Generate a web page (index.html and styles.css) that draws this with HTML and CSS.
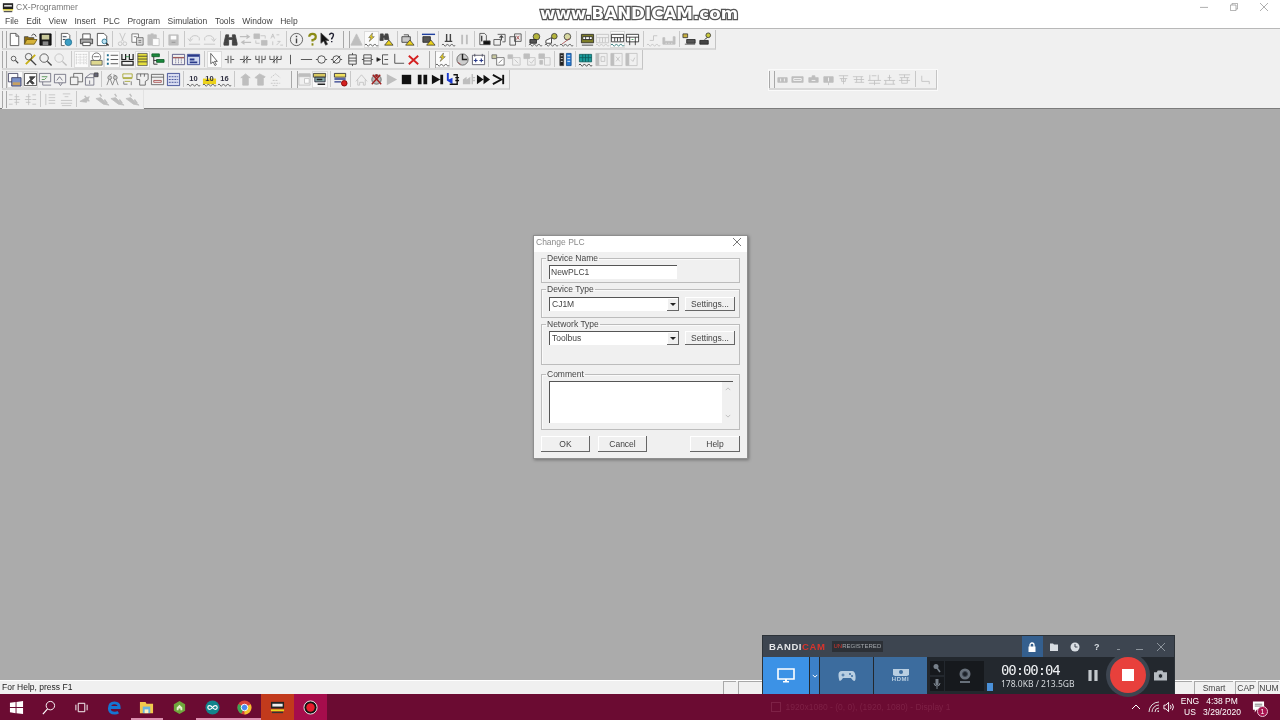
FILE: index.html
```html
<!DOCTYPE html>
<html lang="en">
<head>
  <meta charset="UTF-8">
  <title>CX-Programmer</title>
  <link rel="stylesheet" href="styles.css">
</head>
<body>
  <svg class="defs" xmlns="http://www.w3.org/2000/svg">
    <symbol id="wave" viewBox="0 0 16 16"><path d="M1 14q1-2.5 2.300 0t2.400 0 2.300 0 2.300 0 2.400 0 2.300 0"/></symbol>
    <symbol id="ytri" viewBox="0 0 16 16"><path fill="#ecd21c" stroke="#333" stroke-width=".8" d="M10.500 8.500l4.500 5.500H6z"/></symbol>
    <symbol id="new" viewBox="0 0 16 16"><path fill="#fff" d="M3.500 1.500h6l3 3v10h-9z"/><path d="M9.500 1.500v3h3"/></symbol>
    <symbol id="open" viewBox="0 0 16 16"><path fill="#8d6d10" d="M1.500 13V5h4l1 1h5v2"/><path fill="#d6b33a" stroke="#6b5510" d="M1.500 13l2.500-5h11l-3 5z"/><path stroke="#222" d="M9 4q2-3 4-1l1 2"/></symbol>
    <symbol id="save" viewBox="0 0 16 16"><path fill="#1c1c1c" stroke="#000" d="M2 2h12v12H2z"/><path fill="#c8c89a" stroke="none" d="M4 3h8v5H4z"/><path fill="#888" stroke="none" d="M5 10h6v4H5z"/></symbol>
    <symbol id="cfg" viewBox="0 0 16 16"><path fill="#fff" stroke="#444" d="M2.500 1.500h7l2 2v4M6 14.500H2.500v-13"/><circle cx="10" cy="11" r="3.500" fill="#3d9fc4" stroke="#1a6c8e"/><path stroke="#123" d="M4 5h4M4 8h3"/></symbol>
    <symbol id="print" viewBox="0 0 16 16"><path fill="#fff" stroke="#333" d="M4 7V2h8v5"/><path fill="#aaa" stroke="#333" d="M1.500 7.500h13v5h-13z"/><path fill="#fff" stroke="#333" d="M4 11h8v3.500H4z"/></symbol>
    <symbol id="prev" viewBox="0 0 16 16"><path fill="#fff" stroke="#333" d="M2.500 1.500h7l3 3v10h-10z"/><circle cx="10" cy="10" r="2.500" fill="#bfe3f2" stroke="#1a6c8e"/><path stroke="#333" stroke-width="1.500" d="M12 12l2.500 2.500"/></symbol>
    <symbol id="cut" viewBox="0 0 16 16"><path d="M5 1l4 9M11 1L7 10"/><circle cx="5.500" cy="12.500" r="2"/><circle cx="10.500" cy="12.500" r="2"/></symbol>
    <symbol id="copy" viewBox="0 0 16 16"><path fill="#fff" d="M2 2h7v9H2z"/><path fill="#cfd7ea" d="M7 6h7v8H7z"/><path d="M9 9h3M9 11h3M4 5h3"/></symbol>
    <symbol id="paste" viewBox="0 0 16 16"><path fill="currentColor" d="M2 3h9v11H2z"/><path fill="#fff" d="M7 7h7v7.500H7z"/><path stroke-width="2" d="M5 2.500h3"/></symbol>
    <symbol id="disk" viewBox="0 0 16 16"><path fill="currentColor" d="M3 3h10v11H3z"/><path fill="#fff" stroke="none" d="M5 4h6v4H5z"/><path stroke="#777" d="M6 11h4"/></symbol>
    <symbol id="undo" viewBox="0 0 16 16"><path d="M3 9q1-6 7-5 4 1 3 5"/><path d="M1 7l2.500 3L6 7M2 13h12"/></symbol>
    <symbol id="redo" viewBox="0 0 16 16"><path d="M13 9q-1-6-7-5-4 1-3 5"/><path d="M15 7l-2.500 3L10 7M2 13h12"/></symbol>
    <symbol id="binoc" viewBox="0 0 16 16"><path fill="currentColor" d="M3 3h3v3h4V3h3l2 9h-5V8H6v4H1z"/><path fill="currentColor" d="M1 12h5v2H1zM10 12h5v2h-5z"/></symbol>
    <symbol id="repl" viewBox="0 0 16 16"><path stroke-width="1.300" d="M2 5h10M9 3l3 2-3 2M14 11H4M7 9l-3 2 3 2"/></symbol>
    <symbol id="xref" viewBox="0 0 16 16"><path fill="currentColor" d="M1 2h6v5H1zM9 9h6v5H9z"/><path d="M8 4h5v3M7 12H3V9"/></symbol>
    <symbol id="addr" viewBox="0 0 16 16"><path d="M2 7l2-5 2 5M3 5h2M8 3h3M4 10v4M8 14l4-4h-3M12 14h3"/></symbol>
    <symbol id="info" viewBox="0 0 16 16"><circle cx="8" cy="8" r="6.500"/><path stroke-width="1.500" d="M8 7v5M8 4v1.500"/></symbol>
    <symbol id="hint" viewBox="0 0 16 16"><path stroke="#8a8a14" stroke-width="2.300" d="M4.500 5q0-3 3.500-3t3.500 3-3.500 3.500V10"/><path stroke="#8a8a14" stroke-width="2" d="M8 12v2.500"/></symbol>
    <symbol id="what" viewBox="0 0 16 16"><path fill="#111" d="M1 1v11l3-2.500 2 4.500 2-1-2-4h3.500z"/><path stroke="#223" stroke-width="1.500" d="M10 3q1-2 3-1.500t1 3-1.500 2.500V8M12.500 9.500V11"/></symbol>
    <symbol id="tri" viewBox="0 0 16 16"><path fill="currentColor" d="M8 2l6 12H2z"/></symbol>
    <symbol id="bolt" viewBox="0 0 16 16"><use href="#wave"/><path fill="#ecd21c" stroke="#555" stroke-width=".6" d="M9 1L5 6h2.500L5.500 10 11 5H8.500z"/></symbol>
    <symbol id="binw" viewBox="0 0 16 16"><path fill="currentColor" d="M1.500 2h3v2h2V2h3l1 6H6V6H4.500v3H1z"/><use href="#ytri"/></symbol>
    <symbol id="plcw" viewBox="0 0 16 16"><path fill="#c8c8c8" stroke="#333" d="M2 5h9v6H2z"/><path stroke="#333" d="M4 3h5v2"/><use href="#ytri"/></symbol>
    <symbol id="xfer" viewBox="0 0 16 16"><path stroke="#2040a0" stroke-width="1.500" d="M1 2.500h14"/><path fill="#555" stroke="#222" d="M2 5h8v6H2z"/><use href="#ytri"/></symbol>
    <symbol id="fork" viewBox="0 0 16 16"><use href="#wave"/><path stroke-width="1.500" d="M6 2v8M10 2v8M4 10h8"/></symbol>
    <symbol id="bars" viewBox="0 0 16 16"><path stroke-width="2" d="M5.500 3v10M10.500 3v10"/></symbol>
    <symbol id="dl" viewBox="0 0 16 16"><path d="M3 1.500h5l2 2v6M3 1.500v12h4"/><path fill="#111" d="M7 9.500h7v4H7z"/><path stroke-width="1.500" d="M5 4v6"/></symbol>
    <symbol id="ul" viewBox="0 0 16 16"><path d="M6 2.500h8v8h-3M2 8h7v6H2z"/><path stroke-width="1.200" d="M10 9V4M8 6l2-2 2 2"/></symbol>
    <symbol id="cmpx" viewBox="0 0 16 16"><path d="M2 5h6v9H2zM7 2h7v8H7z"/><path stroke="#a04040" d="M9 4l3 4M12 4L9 8"/></symbol>
    <symbol id="g1" viewBox="0 0 16 16"><circle cx="9" cy="5" r="3.500" fill="#b4b43c" stroke="#333"/><path fill="#555" stroke="#222" d="M2 8h7v4H2z"/><use href="#wave"/></symbol>
    <symbol id="g2" viewBox="0 0 16 16"><circle cx="11" cy="4.500" r="3" fill="#b4b43c" stroke="#333"/><path fill="#fff" stroke="#222" d="M2 9l6-3v6H2z"/><use href="#wave"/></symbol>
    <symbol id="g3" viewBox="0 0 16 16"><circle cx="9" cy="5" r="3.500" fill="#d8d8a0" stroke="#333"/><path stroke="#a04040" d="M3 13l8-6"/><use href="#wave"/></symbol>
    <symbol id="m1" viewBox="0 0 16 16"><path fill="#7d7d28" stroke="#222" d="M1.500 2.500h13v9h-13z"/><path fill="#fff" stroke="#222" d="M3 5h10v3H3z"/><path stroke="#222" d="M6 5v3M10 5v3M2 14h12"/></symbol>
    <symbol id="m2" viewBox="0 0 16 16"><path d="M1.500 2.500h13v9h-13zM1.500 6h13M5 6v5M8 6v5M11 6v5"/><use href="#wave"/></symbol>
    <symbol id="m3" viewBox="0 0 16 16"><path stroke="#222" d="M1.500 2.500h13v8h-13zM1.500 6h13M5 6v4M8 6v4M11 6v4"/><path stroke="#1a6c6c" d="M1 14q1-2.500 2.300 0t2.400 0 2.300 0 2.300 0 2.400 0 2.300 0"/></symbol>
    <symbol id="m4" viewBox="0 0 16 16"><path fill="#fff" stroke="#222" d="M1.500 2.500h13v8h-13z"/><path stroke="#222" d="M1.500 5.500h13M5 5.500V14M11 5.500V14"/><path stroke="#2a8a40" d="M7 8h2"/></symbol>
    <symbol id="r1" viewBox="0 0 16 16"><use href="#wave"/><path d="M4 9h4V4h4"/></symbol>
    <symbol id="r2" viewBox="0 0 16 16"><path fill="currentColor" d="M2 6h2v4h9V5h2v8H2z"/><path stroke="#fff" d="M5 12h1M8 12h1M11 12h1"/></symbol>
    <symbol id="p1" viewBox="0 0 16 16"><path fill="#c8b040" stroke="#333" d="M1 2h5v4H1z"/><path fill="#555" stroke="#222" d="M5 8h9v4H5z"/><path d="M3 13h11"/></symbol>
    <symbol id="p2" viewBox="0 0 16 16"><circle cx="12" cy="3.500" r="2.500" fill="#c8c83c" stroke="#333"/><path stroke="#222" d="M11 6L8 8"/><path fill="#444" stroke="#222" d="M3 9h9v4H3z"/></symbol>
    <symbol id="z1" viewBox="0 0 16 16"><circle cx="7" cy="7" r="2.500"/><path stroke-width="1.200" d="M9 9l3 3"/></symbol>
    <symbol id="zx" viewBox="0 0 16 16"><path stroke="#c8b014" stroke-width="2" d="M3 13L13 3"/><circle cx="6" cy="5" r="3.500"/><path stroke-width="1.500" d="M8 8l6 6"/></symbol>
    <symbol id="z" viewBox="0 0 16 16"><circle cx="6.500" cy="6.500" r="4.500"/><path stroke-width="1.500" d="M10 10l4.500 4.500"/></symbol>
    <symbol id="grid" viewBox="0 0 16 16"><path stroke-dasharray="1 1" d="M2 2.500h12M2 5.500h12M2 8.500h12M2 11.500h12M2.500 2v11M6.500 2v11M10.500 2v11M13.500 2v11"/></symbol>
    <symbol id="note" viewBox="0 0 16 16"><circle cx="8" cy="5.500" r="4.500" fill="#fff" stroke="#555"/><path fill="#ded890" stroke="#555" d="M2 9h12v5H2z"/><path stroke="#555" d="M5 5h6"/></symbol>
    <symbol id="list" viewBox="0 0 16 16"><path stroke="#333" d="M6 3.500h8M6 8h8M6 12.500h8"/><path stroke="#1a6c8e" stroke-width="2" d="M2 3.500h2M2 8h2M2 12.500h2"/></symbol>
    <symbol id="rows" viewBox="0 0 16 16"><path stroke="#222" stroke-width="1.300" d="M2 2v6h4V2M10 2v6h4V2M2 10h12v4H2z"/><path stroke="#2a8a40" d="M6 5h4"/></symbol>
    <symbol id="ylist" viewBox="0 0 16 16"><path fill="#e6df3c" stroke="#555" d="M3 1.500h10v13H3z"/><path stroke="#333" d="M3 4.500h10M3 7.500h10M3 10.500h10"/></symbol>
    <symbol id="tree" viewBox="0 0 16 16"><path fill="#1a8a3c" stroke="#0d5a26" d="M2 2h8v3H2z"/><path fill="#1a8a3c" stroke="#0d5a26" d="M7 8h8v3H7z"/><path stroke="#111" d="M4 5v8h4M4 9h3"/></symbol>
    <symbol id="tbl" viewBox="0 0 16 16"><path stroke="#447" d="M1.500 2.500h13v11h-13z"/><path stroke="#a05a5a" stroke-width="1.500" d="M2 6h12"/><path stroke="#447" stroke-dasharray="1 1" d="M5 7v6M8 7v6M11 7v6"/></symbol>
    <symbol id="tblb" viewBox="0 0 16 16"><path fill="#cfd8f0" stroke="#2a3a8a" d="M1.500 2.500h13v11h-13z"/><path stroke="#2a3a8a" stroke-width="2" d="M2 4h12M4 8h5M4 11h8"/></symbol>
    <symbol id="arrow" viewBox="0 0 16 16"><path fill="#fff" stroke="#444" d="M4 1.500v11l2.500-2 2 4 1.500-1-2-3.500H11z"/></symbol>
    <symbol id="no" viewBox="0 0 16 16"><path stroke="#333" d="M3 8h3M10 8h3M6.500 4v8M9.500 4v8"/></symbol>
    <symbol id="nc" viewBox="0 0 16 16"><path stroke="#333" d="M2 8h4M10 8h4M6.500 4v8M9.500 4v8M5 11l6-6"/></symbol>
    <symbol id="pno" viewBox="0 0 16 16"><path stroke="#333" d="M3 4v4h3M13 4v4h-3M6.500 4v8M9.500 4v8"/></symbol>
    <symbol id="pnc" viewBox="0 0 16 16"><path stroke="#333" d="M2 4v4h4M14 4v4h-4M6.500 4v8M9.500 4v8M5 11l6-6"/></symbol>
    <symbol id="vline" viewBox="0 0 16 16"><path stroke="#333" d="M8 3v10"/></symbol>
    <symbol id="hline" viewBox="0 0 16 16"><path stroke="#333" d="M2 8h12"/></symbol>
    <symbol id="coil" viewBox="0 0 16 16"><path stroke="#333" d="M2 8h2M12 8h2"/><circle cx="8" cy="8" r="4" stroke="#333"/></symbol>
    <symbol id="ncoil" viewBox="0 0 16 16"><path stroke="#333" d="M2 8h2M12 8h2M4 12l8-8"/><circle cx="8" cy="8" r="4" stroke="#333"/></symbol>
    <symbol id="cmd" viewBox="0 0 16 16"><path stroke="#333" d="M4 3h8v10H4zM4 6.500h8M4 9.500h8M8 1v2M8 13v2"/></symbol>
    <symbol id="cmd2" viewBox="0 0 16 16"><path stroke="#333" d="M4 3h8v10H4zM4 6.500h8M4 9.500h8M2 8h2M12 8h2"/></symbol>
    <symbol id="net" viewBox="0 0 16 16"><path stroke="#333" d="M8 3h6M8 3v10h6M10 8h4"/><path fill="#111" d="M2 6l4 2-4 2z"/></symbol>
    <symbol id="corner" viewBox="0 0 16 16"><path stroke="#333" d="M4 2v10h10"/></symbol>
    <symbol id="redx" viewBox="0 0 16 16"><path stroke="#d42020" stroke-width="2" d="M3 4l10 9M13 4L3 13"/></symbol>
    <symbol id="wheel" viewBox="0 0 16 16"><circle cx="8" cy="8" r="6" fill="#ccc" stroke="#555"/><path stroke="#222" stroke-width="1.500" d="M8 2v6h5"/><path stroke="#a04040" d="M3 11l3 2"/></symbol>
    <symbol id="pp" viewBox="0 0 16 16"><path fill="#fff" stroke="#445" d="M1.500 3.500h13v10h-13z"/><path stroke="#445" d="M4 2v3M12 2v3"/><path stroke="#2a3a8a" stroke-width="1.200" d="M3 9h4M5 7v4M9 9h4M11 7v4"/></symbol>
    <symbol id="bx1" viewBox="0 0 16 16"><path fill="#c8c8a0" stroke="#666" d="M1 3h5v4H1z"/><path fill="#fff" stroke="#666" d="M6 6h8v8H6z"/><path stroke="#666" d="M8 12l4-4"/></symbol>
    <symbol id="bx2" viewBox="0 0 16 16"><path fill="currentColor" d="M1 3h5v4H1z"/><path d="M6 6h8v8H6zM8 8l4 4"/></symbol>
    <symbol id="bx3" viewBox="0 0 16 16"><path fill="currentColor" d="M2 2h6v5H2z"/><path d="M6 6h8v8H6zM8 10l2 2 3-4"/></symbol>
    <symbol id="bx4" viewBox="0 0 16 16"><path fill="currentColor" d="M2 2h6v5H2z"/><path d="M8 6h6v8H8z"/><path fill="currentColor" d="M3 9h3v4H3z"/></symbol>
    <symbol id="cols" viewBox="0 0 16 16"><path fill="#222" d="M2 1.500h4v13H2z"/><path fill="#2a7ad0" stroke="#124a8a" d="M9 1.500h5v13H9z"/><path stroke="#fff" d="M3 4h2M3 7h2M3 10h2M10 4h3M10 7h3M10 10h3"/></symbol>
    <symbol id="mt" viewBox="0 0 16 16"><path fill="#1a9a9a" stroke="#0d5a5a" d="M1.500 2.500h13v8h-13z"/><path stroke="#0d5a5a" d="M5 2.500v8M8 2.500v8M11 2.500v8M1.500 6h13"/><path stroke="#222" d="M1 14q1-2.500 2.300 0t2.400 0 2.300 0 2.300 0 2.400 0 2.300 0"/></symbol>
    <symbol id="pgx" viewBox="0 0 16 16"><path fill="currentColor" d="M2 1.500h3v13H2z"/><path d="M5 1.500h9v13H5zM7.500 5h4v5h-4z"/></symbol>
    <symbol id="pgd" viewBox="0 0 16 16"><path fill="currentColor" d="M2 1.500h3v13H2z"/><path d="M5 1.500h9v13H5zM7.500 5l4 5M11.500 5l-4 5"/></symbol>
    <symbol id="pgc" viewBox="0 0 16 16"><path fill="currentColor" d="M2 1.500h3v13H2z"/><path d="M5 1.500h9v13H5zM7.500 8l2 2 2-4"/></symbol>
    <symbol id="w1" viewBox="0 0 16 16"><path stroke="#335" d="M1.500 1.500h10v9h-10z"/><path fill="#7a90c8" stroke="#335" d="M5 6h10v9H5z"/><path fill="#c8a060" stroke="none" d="M6 11h8v3H6z"/></symbol>
    <symbol id="w2" viewBox="0 0 16 16"><path stroke="#333" d="M1.500 1.500h13v13h-13z"/><path fill="#444" d="M4 12l4-4-1-3h6L9 9l3 3-2 1-3-3-2 3z"/></symbol>
    <symbol id="w3" viewBox="0 0 16 16"><path stroke="#667" d="M1.500 1.500h12v9h-12zM5 10.500V14h9"/><path stroke="#484" d="M4 5h6M4 8h3l2-2"/></symbol>
    <symbol id="w4" viewBox="0 0 16 16"><path stroke="#667" d="M1.500 2.500h12v9h-12zM6 11.500l2 3 2-3M4 9l3-4 3 4"/></symbol>
    <symbol id="w5" viewBox="0 0 16 16"><path stroke="#555" d="M1.500 5.500h8v8h-8zM5 5.500V1.500h9.500v9H9.500"/></symbol>
    <symbol id="w6" viewBox="0 0 16 16"><path stroke="#667" d="M1.500 6h9v8h-9zM1.500 6l5-4h4v4"/><path fill="#667" d="M11 1h4v4h-4z"/><path stroke="#667" d="M6 9v4"/></symbol>
    <symbol id="a1" viewBox="0 0 16 16"><path stroke="#777" d="M2 14l3-8 3 8M8 14l3-8 3 8M4 4l3-2M9 3l3 1"/><circle cx="5" cy="6" r="2" fill="#ccc" stroke="#777"/><circle cx="11" cy="6" r="2" fill="#ccc" stroke="#777"/></symbol>
    <symbol id="a2" viewBox="0 0 16 16"><path stroke="#a0a020" d="M3 2h10v4H3zM3 7h10M5 10h6"/><path stroke="#666" d="M4 10v3h4M12 10v4"/></symbol>
    <symbol id="a3" viewBox="0 0 16 16"><path stroke="#555" d="M2 2h12v6l-3 2v4H5V8H2z"/><path stroke="#555" d="M6 2v3M10 2v3"/></symbol>
    <symbol id="a4" viewBox="0 0 16 16"><path stroke="#555" d="M1.500 2.500h13v11h-13zM1.500 5.500h13"/><path stroke="#a04040" d="M4 9h8v2H4z"/></symbol>
    <symbol id="a5" viewBox="0 0 16 16"><path fill="#d8dcf0" stroke="#2a3a8a" d="M1.500 1.500h13v13h-13z"/><path stroke="#2a3a8a" stroke-dasharray="2 1" d="M3 5h10M3 8h10M3 11h10"/></symbol>
    <symbol id="up" viewBox="0 0 16 16"><path fill="currentColor" d="M3 6l5-4 5 4h-2v8H5V6z"/></symbol>
    <symbol id="up2" viewBox="0 0 16 16"><path fill="currentColor" d="M2 6l5-4 6 3-2 2v7H5V7z"/></symbol>
    <symbol id="up3" viewBox="0 0 16 16"><path d="M3 6l5-4 5 4M5 9h6M3 12h10M5 14.500h6" stroke-dasharray="2 1"/></symbol>
    <symbol id="s1" viewBox="0 0 16 16"><path fill="currentColor" d="M2 2h12v3H2z"/><path d="M2 2h12v12H2z"/><path fill="#fff" d="M8 7h5v5H8z"/></symbol>
    <symbol id="s2" viewBox="0 0 16 16"><path fill="#d8c860" stroke="#333" d="M1.500 1.500h13v4h-13z"/><path fill="#8aa" stroke="#223" d="M3 5.500h11v5H3z"/><path stroke="#222" stroke-width="1.500" d="M6 13h8M5 8h6"/></symbol>
    <symbol id="s3" viewBox="0 0 16 16"><path fill="#f0e060" stroke="#223" d="M1.500 1.500h12v4h-12z"/><path stroke="#2a3a8a" stroke-width="1.500" d="M1.500 7.500h12M1.500 10.500h7"/><circle cx="12" cy="12" r="3" fill="#d42020" stroke="#700"/></symbol>
    <symbol id="home" viewBox="0 0 16 16"><path d="M2 10l6-7 6 7M4 8v6h2v-3h4v3h2V8"/></symbol>
    <symbol id="run" viewBox="0 0 16 16"><circle cx="8" cy="8" r="5" fill="#bbb" stroke="#555"/><path stroke="#a02020" stroke-width="1.500" d="M4 3l9 10M12 3L3 13"/><circle cx="8" cy="4" r="1.500" fill="#a02020" stroke="none"/></symbol>
    <symbol id="play" viewBox="0 0 16 16"><path fill="currentColor" stroke="none" d="M3 2l11 6-11 6z"/></symbol>
    <symbol id="stop" viewBox="0 0 16 16"><path fill="#111" stroke="none" d="M3 3h10v10H3z"/></symbol>
    <symbol id="pause" viewBox="0 0 16 16"><path fill="#111" stroke="none" d="M3 3h4v10H3zM9 3h4v10H9z"/></symbol>
    <symbol id="step" viewBox="0 0 16 16"><path fill="#111" stroke="none" d="M2 3l9 5-9 5zM11 3h3v10h-3z"/></symbol>
    <symbol id="stepin" viewBox="0 0 16 16"><path fill="#1a3ad0" stroke="none" d="M2 1h2v7l4-2v7L2 9z"/><path stroke="#111" stroke-width="1.500" d="M9 3h4v10H5M11 6h4M11 9h4"/></symbol>
    <symbol id="stepout" viewBox="0 0 16 16"><path fill="currentColor" stroke="none" d="M2 8l4-3v3l4-3v8H2z"/><path stroke-width="1.500" d="M12 2v11M12 6h3M12 9h3"/></symbol>
    <symbol id="ff" viewBox="0 0 16 16"><path fill="#111" stroke="none" d="M1 3l7 5-7 5zM8 3l7 5-7 5z"/></symbol>
    <symbol id="skip" viewBox="0 0 16 16"><path stroke="#111" stroke-width="2" d="M2 3l9 5-9 5"/><path stroke="#111" stroke-width="2" d="M13 3v10"/></symbol>
    <symbol id="in1" viewBox="0 0 16 16"><path d="M2 3h4M2 8h4M2 13h4M10 2v12M7 8h7M8 5h5M8 11h5"/></symbol>
    <symbol id="in2" viewBox="0 0 16 16"><path d="M10 3h4M10 8h4M10 13h4M6 2v12M2 8h7M3 5h5M3 11h5"/></symbol>
    <symbol id="ln1" viewBox="0 0 16 16"><path d="M3 2v12M6 3h7M6 6h7M6 9h7M6 12h7"/></symbol>
    <symbol id="ln2" viewBox="0 0 16 16"><path d="M4 2h8M6 5h4M2 9h12M2 12h12M3 14.500h10"/></symbol>
    <symbol id="d1" viewBox="0 0 16 16"><path fill="currentColor" d="M1 10l5-3 5-2-3 6z"/><path stroke-width="1.500" d="M6 4l5 6"/></symbol>
    <symbol id="d2" viewBox="0 0 16 16"><path fill="currentColor" d="M1 7l5-1 4 4 5 4-6-1-4-3z"/><path stroke-width="1.500" d="M5 2l2 3M10 8l3 4"/></symbol>
    <symbol id="f1" viewBox="0 0 16 16"><path fill="currentColor" d="M3 6h10v5H3z"/><path stroke="#fff" d="M6 7v3M10 7v3"/></symbol>
    <symbol id="f2" viewBox="0 0 16 16"><path fill="currentColor" d="M2 5h12v6H2z"/><path stroke="#fff" d="M4 7h8v2H4z"/></symbol>
    <symbol id="f3" viewBox="0 0 16 16"><path fill="currentColor" d="M3 6h10v5H3zM6.500 4h3v3h-3z"/><path stroke="#fff" d="M6 9h4"/></symbol>
    <symbol id="f4" viewBox="0 0 16 16"><path fill="currentColor" d="M3 5h10v6H3z"/><path stroke="#fff" d="M8 6v4"/><path d="M8 11v3"/></symbol>
    <symbol id="f5" viewBox="0 0 16 16"><path d="M3 4h10M4 7h8M8 4v9M6 7v3h4V7"/></symbol>
    <symbol id="f6" viewBox="0 0 16 16"><path d="M2 5h11M3 8h11M4 11h10M6 5v6M11 5v6"/></symbol>
    <symbol id="f7" viewBox="0 0 16 16"><path d="M3 3v6M12 3v6M1 9h14M5 4h5M2 12h12M8 9v5"/></symbol>
    <symbol id="f8" viewBox="0 0 16 16"><path d="M8 3v6M2 9h12M4 9v4M12 9v4M2 13h12M6 6h4"/></symbol>
    <symbol id="f9" viewBox="0 0 16 16"><path d="M2 3h12M3 6h10M8 3v3M2 9h12M5 6v6h6V6"/></symbol>
    <symbol id="f10" viewBox="0 0 16 16"><path d="M4 4v6h8v3"/></symbol>
  </svg>

  <div class="titlebar">
    <svg class="appicon" viewBox="0 0 14 12"><path fill="#222" d="M1 1h12v7H1z"/><path fill="#ddd" d="M2.500 3h9v2h-9z"/><path fill="#d8c820" d="M1 8h12v1.500H1z"/><path fill="#555" d="M2 10h10v1.500H2z"/></svg>
    <span class="apptitle">CX-Programmer</span>
    <div class="winbtns">
      <svg class="winbtn" viewBox="0 0 10 10"><path d="M0 5.500h10"/></svg>
      <svg class="winbtn" viewBox="0 0 10 10"><path d="M.5 2.500h7v7h-7zM2.500 2.500v-2h7v7h-2"/></svg>
      <svg class="winbtn" viewBox="0 0 10 10"><path d="M0 0l10 10M10 0L0 10"/></svg>
    </div>
  </div>

  <nav class="menubar">
    <span>File</span><span>Edit</span><span>View</span><span>Insert</span><span>PLC</span><span>Program</span><span>Simulation</span><span>Tools</span><span>Window</span><span>Help</span>
  </nav>

  <div class="toolbars">
    <div class="toolrow">
      <div class="bar">
        <span class="grip"></span>
        <button class="tb"><svg class="ic"><use href="#new"/></svg></button>
        <button class="tb"><svg class="ic"><use href="#open"/></svg></button>
        <button class="tb"><svg class="ic"><use href="#save"/></svg></button>
        <span class="sep"></span>
        <button class="tb"><svg class="ic"><use href="#cfg"/></svg></button>
        <span class="sep"></span>
        <button class="tb"><svg class="ic"><use href="#print"/></svg></button>
        <button class="tb"><svg class="ic"><use href="#prev"/></svg></button>
        <span class="sep"></span>
        <button class="tb off"><svg class="ic"><use href="#cut"/></svg></button>
        <button class="tb dim"><svg class="ic"><use href="#copy"/></svg></button>
        <button class="tb off"><svg class="ic"><use href="#paste"/></svg></button>
        <span class="sep"></span>
        <button class="tb off"><svg class="ic"><use href="#disk"/></svg></button>
        <span class="sep"></span>
        <button class="tb off"><svg class="ic"><use href="#undo"/></svg></button>
        <button class="tb off"><svg class="ic"><use href="#redo"/></svg></button>
        <span class="sep"></span>
        <button class="tb"><svg class="ic"><use href="#binoc"/></svg></button>
        <button class="tb off"><svg class="ic"><use href="#repl"/></svg></button>
        <button class="tb off"><svg class="ic"><use href="#xref"/></svg></button>
        <button class="tb off"><svg class="ic"><use href="#addr"/></svg></button>
        <span class="sep"></span>
        <button class="tb"><svg class="ic"><use href="#info"/></svg></button>
        <button class="tb"><svg class="ic"><use href="#hint"/></svg></button>
        <button class="tb"><svg class="ic"><use href="#what"/></svg></button>
        <span class="midgrip"></span>
        <button class="tb off"><svg class="ic"><use href="#tri"/></svg></button>
        <button class="tb on"><svg class="ic"><use href="#bolt"/></svg></button>
        <button class="tb"><svg class="ic"><use href="#binw"/></svg></button>
        <span class="sep"></span>
        <button class="tb"><svg class="ic"><use href="#plcw"/></svg></button>
        <span class="sep"></span>
        <button class="tb"><svg class="ic"><use href="#xfer"/></svg></button>
        <span class="sep"></span>
        <button class="tb"><svg class="ic"><use href="#fork"/></svg></button>
        <button class="tb off"><svg class="ic"><use href="#bars"/></svg></button>
        <span class="sep"></span>
        <button class="tb"><svg class="ic"><use href="#dl"/></svg></button>
        <button class="tb"><svg class="ic"><use href="#ul"/></svg></button>
        <button class="tb"><svg class="ic"><use href="#cmpx"/></svg></button>
        <span class="sep"></span>
        <button class="tb"><svg class="ic"><use href="#g1"/></svg></button>
        <button class="tb"><svg class="ic"><use href="#g2"/></svg></button>
        <button class="tb"><svg class="ic"><use href="#g3"/></svg></button>
        <span class="sep"></span>
        <button class="tb"><svg class="ic"><use href="#m1"/></svg></button>
        <button class="tb off"><svg class="ic"><use href="#m2"/></svg></button>
        <button class="tb on"><svg class="ic"><use href="#m3"/></svg></button>
        <button class="tb"><svg class="ic"><use href="#m4"/></svg></button>
        <span class="sep"></span>
        <button class="tb off"><svg class="ic"><use href="#r1"/></svg></button>
        <button class="tb off"><svg class="ic"><use href="#r2"/></svg></button>
        <span class="sep"></span>
        <button class="tb"><svg class="ic"><use href="#p1"/></svg></button>
        <button class="tb"><svg class="ic"><use href="#p2"/></svg></button>
      </div>
    </div>
    <div class="toolrow">
      <div class="bar">
        <span class="grip"></span>
        <button class="tb"><svg class="ic"><use href="#z1"/></svg></button>
        <button class="tb"><svg class="ic"><use href="#zx"/></svg></button>
        <button class="tb"><svg class="ic"><use href="#z"/></svg></button>
        <button class="tb off"><svg class="ic"><use href="#z"/></svg></button>
        <span class="sep"></span>
        <button class="tb on off"><svg class="ic"><use href="#grid"/></svg></button>
        <button class="tb on"><svg class="ic"><use href="#note"/></svg></button>
        <button class="tb on"><svg class="ic"><use href="#list"/></svg></button>
        <button class="tb"><svg class="ic"><use href="#rows"/></svg></button>
        <button class="tb on"><svg class="ic"><use href="#ylist"/></svg></button>
        <button class="tb"><svg class="ic"><use href="#tree"/></svg></button>
        <span class="sep"></span>
        <button class="tb"><svg class="ic"><use href="#tbl"/></svg></button>
        <button class="tb"><svg class="ic"><use href="#tblb"/></svg></button>
        <span class="sep"></span>
        <button class="tb on"><svg class="ic"><use href="#arrow"/></svg></button>
        <button class="tb"><svg class="ic"><use href="#no"/></svg></button>
        <button class="tb"><svg class="ic"><use href="#nc"/></svg></button>
        <button class="tb"><svg class="ic"><use href="#pno"/></svg></button>
        <button class="tb"><svg class="ic"><use href="#pnc"/></svg></button>
        <button class="tb"><svg class="ic"><use href="#vline"/></svg></button>
        <button class="tb"><svg class="ic"><use href="#hline"/></svg></button>
        <button class="tb"><svg class="ic"><use href="#coil"/></svg></button>
        <button class="tb"><svg class="ic"><use href="#ncoil"/></svg></button>
        <button class="tb"><svg class="ic"><use href="#cmd"/></svg></button>
        <button class="tb"><svg class="ic"><use href="#cmd2"/></svg></button>
        <button class="tb"><svg class="ic"><use href="#net"/></svg></button>
        <button class="tb"><svg class="ic"><use href="#corner"/></svg></button>
        <button class="tb"><svg class="ic"><use href="#redx"/></svg></button>
        <span class="midgrip"></span>
        <button class="tb on"><svg class="ic"><use href="#bolt"/></svg></button>
        <span class="sep"></span>
        <button class="tb"><svg class="ic"><use href="#wheel"/></svg></button>
        <button class="tb"><svg class="ic"><use href="#pp"/></svg></button>
        <span class="sep"></span>
        <button class="tb"><svg class="ic"><use href="#bx1"/></svg></button>
        <button class="tb off"><svg class="ic"><use href="#bx2"/></svg></button>
        <button class="tb off"><svg class="ic"><use href="#bx3"/></svg></button>
        <button class="tb off"><svg class="ic"><use href="#bx4"/></svg></button>
        <span class="sep"></span>
        <button class="tb"><svg class="ic"><use href="#cols"/></svg></button>
        <span class="sep"></span>
        <button class="tb"><svg class="ic"><use href="#mt"/></svg></button>
        <button class="tb off"><svg class="ic"><use href="#pgx"/></svg></button>
        <button class="tb off"><svg class="ic"><use href="#pgd"/></svg></button>
        <button class="tb off"><svg class="ic"><use href="#pgc"/></svg></button>
      </div>
    </div>
    <div class="toolrow">
      <div class="bar">
        <span class="grip"></span>
        <button class="tb on"><svg class="ic"><use href="#w1"/></svg></button>
        <button class="tb on"><svg class="ic"><use href="#w2"/></svg></button>
        <button class="tb"><svg class="ic"><use href="#w3"/></svg></button>
        <button class="tb"><svg class="ic"><use href="#w4"/></svg></button>
        <button class="tb"><svg class="ic"><use href="#w5"/></svg></button>
        <button class="tb"><svg class="ic"><use href="#w6"/></svg></button>
        <span class="sep"></span>
        <button class="tb"><svg class="ic"><use href="#a1"/></svg></button>
        <button class="tb"><svg class="ic"><use href="#a2"/></svg></button>
        <button class="tb"><svg class="ic"><use href="#a3"/></svg></button>
        <button class="tb"><svg class="ic"><use href="#a4"/></svg></button>
        <button class="tb"><svg class="ic"><use href="#a5"/></svg></button>
        <span class="sep"></span>
        <button class="tb"><svg class="ic" viewBox="0 0 16 16"><use href="#wave"/><text x="8" y="10" class="ictext">10</text></svg></button>
        <button class="tb"><svg class="ic" viewBox="0 0 16 16"><path class="icmark" d="M1 7h14v6H1z"/><use href="#wave"/><text x="8" y="10" class="ictext">10</text></svg></button>
        <button class="tb"><svg class="ic" viewBox="0 0 16 16"><use href="#wave"/><text x="8" y="10" class="ictext">16</text></svg></button>
        <span class="sep"></span>
        <button class="tb off"><svg class="ic"><use href="#up"/></svg></button>
        <button class="tb off"><svg class="ic"><use href="#up2"/></svg></button>
        <button class="tb off"><svg class="ic"><use href="#up3"/></svg></button>
        <span class="midgrip"></span>
        <button class="tb off"><svg class="ic"><use href="#s1"/></svg></button>
        <button class="tb on"><svg class="ic"><use href="#s2"/></svg></button>
        <span class="sep"></span>
        <button class="tb"><svg class="ic"><use href="#s3"/></svg></button>
        <span class="sep"></span>
        <button class="tb off"><svg class="ic"><use href="#home"/></svg></button>
        <button class="tb"><svg class="ic"><use href="#run"/></svg></button>
        <button class="tb off"><svg class="ic"><use href="#play"/></svg></button>
        <button class="tb"><svg class="ic"><use href="#stop"/></svg></button>
        <button class="tb"><svg class="ic"><use href="#pause"/></svg></button>
        <button class="tb"><svg class="ic"><use href="#step"/></svg></button>
        <button class="tb"><svg class="ic"><use href="#stepin"/></svg></button>
        <button class="tb off"><svg class="ic"><use href="#stepout"/></svg></button>
        <button class="tb"><svg class="ic"><use href="#ff"/></svg></button>
        <button class="tb"><svg class="ic"><use href="#skip"/></svg></button>
      </div>
      <div class="bar floatbar">
        <span class="grip"></span>
        <button class="tb off"><svg class="ic"><use href="#f1"/></svg></button>
        <button class="tb off"><svg class="ic"><use href="#f2"/></svg></button>
        <button class="tb off"><svg class="ic"><use href="#f3"/></svg></button>
        <button class="tb off"><svg class="ic"><use href="#f4"/></svg></button>
        <button class="tb off"><svg class="ic"><use href="#f5"/></svg></button>
        <button class="tb off"><svg class="ic"><use href="#f6"/></svg></button>
        <button class="tb off"><svg class="ic"><use href="#f7"/></svg></button>
        <button class="tb off"><svg class="ic"><use href="#f8"/></svg></button>
        <button class="tb off"><svg class="ic"><use href="#f9"/></svg></button>
        <span class="sep"></span>
        <button class="tb off"><svg class="ic"><use href="#f10"/></svg></button>
      </div>
    </div>
    <div class="toolrow">
      <div class="bar lastbar">
        <span class="grip"></span>
        <button class="tb off"><svg class="ic"><use href="#in1"/></svg></button>
        <button class="tb off"><svg class="ic"><use href="#in2"/></svg></button>
        <span class="sep"></span>
        <button class="tb off"><svg class="ic"><use href="#ln1"/></svg></button>
        <button class="tb off"><svg class="ic"><use href="#ln2"/></svg></button>
        <span class="sep"></span>
        <button class="tb off"><svg class="ic"><use href="#d1"/></svg></button>
        <button class="tb off"><svg class="ic"><use href="#d2"/></svg></button>
        <button class="tb off"><svg class="ic"><use href="#d2"/></svg></button>
        <button class="tb off"><svg class="ic"><use href="#d2"/></svg></button>
      </div>
    </div>
  </div>

  <main class="workspace"></main>

  <div class="statusbar">
    <span class="statustext">For Help, press F1</span>
    <span class="panel p-a"></span>
    <span class="panel p-b"></span>
    <span class="panel p-smart">Smart</span>
    <span class="panel p-cap">CAP</span>
    <span class="panel p-num">NUM</span>
  </div>

  <div class="taskbar">
    <span class="task"><svg class="tkicon" viewBox="0 0 16 16"><path fill="#fff" d="M1 3l6-1v5.500H1zM8 2l7-1v6.500H8zM1 8.500h6V14l-6-1zM8 8.500h7V15l-7-1z"/></svg></span>
    <span class="task"><svg class="tkicon" viewBox="0 0 16 16"><circle cx="10" cy="6" r="4.500" fill="none" stroke="#fff"/><path stroke="#fff" stroke-width="1.300" d="M7 9.500L2 15"/></svg></span>
    <span class="task"><svg class="tkicon" viewBox="0 0 16 16"><path fill="none" stroke="#fff" d="M4.500 3.500h7v9h-7zM2 5v6M14 5v6"/></svg></span>
    <span class="task"><svg class="tkicon" viewBox="0 0 16 16"><path fill="none" stroke="#1676d2" stroke-width="3" d="M3 8h10q0-5-5-5-5.500 0-5.500 6 0 5 6 5 2 0 3.500-1"/></svg></span>
    <span class="task task-open"><svg class="tkicon" viewBox="0 0 16 16"><path fill="#f2c94c" d="M1 2h6l1 2h7v10H1z"/><path fill="#6cb6dc" d="M4 7h8v7H4z"/><path fill="#fff3c4" d="M6 10h4v4H6z"/></svg></span>
    <span class="task"><svg class="tkicon" viewBox="0 0 16 16"><path fill="#6fa83c" d="M8 1l6 3.500v7L8 15l-6-3.500v-7z"/><path fill="#e8f0d0" d="M8 5l3 3v3H9V9H7v2H5V8z"/></svg></span>
    <span class="task task-open"><svg class="tkicon" viewBox="0 0 16 16"><circle cx="8" cy="8" r="7.500" fill="#12838c"/><path fill="none" stroke="#fff" stroke-width="1.300" d="M8 8q-1.500-2-3-2a2 2 0 000 4q1.500 0 3-2 1.500-2 3-2a2 2 0 010 4q-1.500 0-3-2z"/></svg></span>
    <span class="task task-open"><svg class="tkicon" viewBox="0 0 16 16"><circle cx="8" cy="8" r="7.500" fill="#d8433a"/><path fill="#f2c230" d="M8 8l6.500-3.500A7.500 7.500 0 018 15.500z"/><path fill="#3aa655" d="M8 8L4.500 14.600A7.500 7.500 0 011.500 4.200z"/><circle cx="8" cy="8" r="3.500" fill="#4a8af0" stroke="#fff"/></svg></span>
    <span class="task task-cx"><svg class="tkicon" viewBox="0 0 16 16"><path fill="#222" d="M1 2h14v7H1z"/><path fill="#eee" d="M2.500 4h11v3h-11z"/><path fill="#e8d820" d="M1 10h14v2H1z"/><path fill="#333" d="M2 12.500h12V14H2z"/></svg></span>
    <span class="task task-rec"><svg class="tkicon" viewBox="0 0 16 16"><circle cx="8" cy="8" r="7" fill="#111" stroke="#eee"/><circle cx="8" cy="8" r="4.500" fill="#e81c2c"/></svg></span>
    <span class="dimtext"><span class="dimbox"></span>1920x1080 - (0, 0), (1920, 1080) - Display 1</span>
    <div class="tray">
      <svg class="tray-chev" viewBox="0 0 10 6"><path fill="none" stroke="#fff" d="M1 5l4-4 4 4"/></svg>
      <svg class="tray-net" viewBox="0 0 12 12"><path fill="none" stroke="#ddd" d="M1 11a10 10 0 0110-10M4 11a7 7 0 017-7M7 11a4 4 0 014-4"/><path fill="#ddd" d="M9.500 9.500H11V11H9.500z"/></svg>
      <svg class="tray-vol" viewBox="0 0 14 12"><path fill="none" stroke="#fff" d="M1 4h2l3-3v10L3 8H1z"/><path fill="none" stroke="#fff" d="M8 4q1.500 2 0 4M10 2.500q2.500 3.500 0 7"/></svg>
      <span class="tray-lang">ENG<br>US</span>
      <span class="tray-clock">4:38 PM<br>3/29/2020</span>
      <span class="tray-note">
        <svg class="tray-noteicon" viewBox="0 0 14 12"><path fill="#fff" d="M1 0h12v9H5l-2 3V9H1z"/><path stroke="#777" d="M3 3h8M3 5h8"/></svg>
        <span class="tray-badge">1</span>
      </span>
    </div>
  </div>

  <div class="watermark">www.BANDICAM.com</div>

  <section class="dialog">
    <header class="dlgtitle">
      <span>Change PLC</span>
      <svg class="dlgclose" viewBox="0 0 8 8"><path d="M0 0l8 8M8 0L0 8"/></svg>
    </header>
    <div class="dlgbody">
      <fieldset class="grp grp-name">
        <legend>Device Name</legend>
        <div class="field">NewPLC1</div>
      </fieldset>
      <fieldset class="grp grp-type">
        <legend>Device Type</legend>
        <div class="grprow">
          <div class="combo"><span>CJ1M</span><span class="comboarrow"></span></div>
          <button class="btn btn-set">Settings...</button>
        </div>
      </fieldset>
      <fieldset class="grp grp-net">
        <legend>Network Type</legend>
        <div class="grprow">
          <div class="combo"><span>Toolbus</span><span class="comboarrow"></span></div>
          <button class="btn btn-set">Settings...</button>
        </div>
      </fieldset>
      <fieldset class="grp grp-comment">
        <legend>Comment</legend>
        <div class="memo">
          <div class="memoscroll">
            <svg class="memoarrow" viewBox="0 0 8 5"><path d="M1 4l3-3 3 3"/></svg>
            <svg class="memoarrow" viewBox="0 0 8 5"><path d="M1 1l3 3 3-3"/></svg>
          </div>
        </div>
      </fieldset>
      <div class="dlgbtns">
        <button class="btn btn-main">OK</button>
        <button class="btn btn-main">Cancel</button>
        <button class="btn btn-main btn-help">Help</button>
      </div>
    </div>
  </section>

  <section class="bandicam">
    <header class="bc-head">
      <span class="bc-logo">BANDI<em>CAM</em></span>
      <span class="bc-unreg"><em>UN</em>REGISTERED</span>
      <div class="bc-actions">
        <span class="bc-act bc-lock"><svg class="bc-acticon" viewBox="0 0 10 10"><path fill="none" stroke="#fff" stroke-width="1.300" d="M3 5V3a2 2 0 014 0v2"/><path fill="#fff" d="M1.500 4.500h7V10h-7z"/></svg></span>
        <span class="bc-act"><svg class="bc-acticon" viewBox="0 0 10 10"><path fill="#d8dde2" d="M1 1.500h3l1 1h4V9H1z"/></svg></span>
        <span class="bc-act"><svg class="bc-acticon" viewBox="0 0 10 10"><circle cx="5" cy="5" r="4.500" fill="#d8dde2"/><path fill="none" stroke="#3d4550" d="M5 2v3h2.500"/></svg></span>
        <span class="bc-act bc-q">?</span>
        <span class="bc-act bc-dash"></span>
        <span class="bc-act bc-line"></span>
        <span class="bc-act"><svg class="bc-acticon" viewBox="0 0 10 10"><path fill="none" stroke="#8c949c" d="M1 1l8 8M9 1L1 9"/></svg></span>
      </div>
    </header>
    <div class="bc-main">
      <div class="bc-tab bc-screen"><svg class="bc-monitor" viewBox="0 0 18 16"><path fill="none" stroke="#fff" stroke-width="1.600" d="M1 1h16v10H1z"/><path fill="#fff" d="M6 13h6v1.500H6zM8 11h2v2H8z"/></svg></div>
      <div class="bc-tab bc-drop"><svg class="bc-chev" viewBox="0 0 8 5"><path fill="none" stroke="#fff" stroke-width="1.300" d="M1 1l3 3 3-3"/></svg></div>
      <div class="bc-tab bc-mode"><svg class="bc-gamepad" viewBox="0 0 18 12"><path fill="#b9cfe2" d="M4 1h10q3 0 3.500 5t-1.500 5q-1 0-3-3H5q-2 3-3 3T.5 6 4 1z"/><path stroke="#3c6c9e" d="M3.500 5h3M5 3.500v3"/><circle cx="12" cy="4" r="1" fill="#3c6c9e"/><circle cx="14" cy="6" r="1" fill="#3c6c9e"/></svg></div>
      <div class="bc-tab bc-mode bc-hdmi"><svg class="bc-hdmiicon" viewBox="0 0 18 7"><path fill="#b9cfe2" d="M1 0h16v6l-2 1H3L1 6z"/><circle cx="9" cy="3" r="2" fill="#3c6c9e"/></svg><span class="bc-hdmitext">HDMI</span></div>
      <div class="bc-mics">
        <span class="bc-mic"><svg class="bc-micicon" viewBox="0 0 10 10"><circle cx="4" cy="3.500" r="2.500" fill="#77808a"/><path stroke="#77808a" stroke-width="1.500" d="M5 5l3 4"/></svg></span>
        <span class="bc-mic"><svg class="bc-micicon" viewBox="0 0 10 10"><path fill="#77808a" d="M3.500 0h3v6h-3z"/><path fill="none" stroke="#77808a" d="M2 4q0 3 3 3t3-3M5 7v3"/></svg></span>
      </div>
      <div class="bc-cam"><svg class="bc-camicon" viewBox="0 0 14 16"><circle cx="7" cy="6" r="5.500" fill="#67707a"/><circle cx="7" cy="6" r="2.500" fill="#1c2127" stroke="#3d4550"/><path fill="#67707a" d="M2 13h10v2H2z"/></svg></div>
      <div class="bc-meter"><span class="bc-meterfill"></span></div>
      <div class="bc-time">
        <span class="bc-clock">00:00:04</span>
        <span class="bc-size">178.0KB / 213.5GB</span>
      </div>
      <svg class="bc-pause" viewBox="0 0 10 12"><path fill="#c3c8cc" d="M0 0h3.500v12H0zM6.500 0H10v12H6.500z"/></svg>
      <div class="bc-rec"><span class="bc-recdot"><span class="bc-recstop"></span></span></div>
      <svg class="bc-shot" viewBox="0 0 14 11"><path fill="#b6bcc2" d="M0 2h3l1-2h5l1 2h4v9H0z"/><circle cx="7" cy="6" r="2.500" fill="#23282e" stroke="#b6bcc2"/></svg>
    </div>
  </section>
</body>
</html>
```

FILE: styles.css
```css
* {
  box-sizing: border-box;
}
html, body {
  margin: 0;
  height: 100%;
}
body {
  position: relative;
  width: 1280px;
  height: 720px;
  overflow: hidden;
  display: flex;
  flex-direction: column;
  font-family: "Liberation Sans", Arial, sans-serif;
  font-size: 8.5px;
  color: #333;
  background-color: #ababab;
  filter: blur(.3px);
}
.defs {
  position: absolute;
  width: 0;
  height: 0;
}
.ictext {
  font-size: 8px;
  font-weight: bold;
  text-anchor: middle;
  fill: #334;
  stroke: none;
}
.icmark {
  fill: #ecd21c;
  stroke: none;
}

/* title + menu */
.titlebar {
  display: flex;
  align-items: center;
  height: 14px;
  padding-left: 2px;
  background-color: #fff;
}
.appicon {
  width: 12px;
  height: 11px;
  margin-right: 2px;
}
.apptitle {
  color: #777;
}
.winbtns {
  display: flex;
  margin-left: auto;
  margin-right: 12px;
  gap: 22px;
}
.winbtn {
  width: 8px;
  height: 8px;
  fill: none;
  stroke: #9a9a9a;
}
.menubar {
  display: flex;
  align-items: center;
  gap: 7.6px;
  height: 14px;
  padding-left: 5px;
  background-color: #fff;
  color: #444;
}

/* toolbars */
.toolbars {
  height: 81px;
  padding-top: 1px;
  background-color: #f0f0f0;
  border-top: 1px solid #b8b8b8;
  border-bottom: 1px solid #7c7c7c;
}
.toolrow {
  display: flex;
  height: 20px;
}
.bar {
  display: flex;
  align-items: center;
  height: 20px;
  margin-left: 2px;
  padding-right: 3px;
  border-right: 1px solid #c4c4c4;
  border-bottom: 2px solid #d8d8d8;
}
.lastbar {
  border-color: #f0f0f0;
  border-right-color: #e2e2e2;
}
.floatbar {
  margin-left: 259px;
  box-shadow: 0 0 0 1px #fafafa;
}
.grip {
  flex: none;
  width: 5.35px;
  height: 17px;
  border-left: 1px solid #a8a8a8;
  border-right: 1px solid #a8a8a8;
}
.midgrip {
  flex: none;
  position: relative;
  width: 13.7px;
  height: 17px;
}
.midgrip::before {
  content: "";
  position: absolute;
  left: 8px;
  top: 0;
  width: 5px;
  height: 17px;
  border-left: 1px solid #a8a8a8;
  border-right: 1px solid #a8a8a8;
}
.sep {
  flex: none;
  display: flex;
  justify-content: center;
  width: 5.3px;
  height: 16px;
}
.sep::before {
  content: "";
  width: 1px;
  background-color: #c8c8c8;
}
.tb {
  flex: none;
  display: flex;
  align-items: center;
  justify-content: center;
  width: 15.3px;
  height: 17px;
  margin: 0;
  padding: 0;
  border: none;
  background: none;
  color: #444;
}
.tb.on {
  background-color: #fbfbfb;
  box-shadow: inset 0 0 0 1px #dcdcdc;
}
.tb.off {
  color: #b2b2b2;
}
.tb.off .ic, .tb.dim .ic {
  filter: grayscale(1) opacity(.8);
}
.ic {
  flex: none;
  width: 15px;
  height: 15px;
  fill: none;
  stroke: currentColor;
  stroke-width: .85;
}

/* main area */
.workspace {
  flex: 1;
  background-color: #ababab;
}

/* status bar */
.statusbar {
  display: flex;
  align-items: stretch;
  height: 14px;
  background-color: #f0f0f0;
  border-top: 1px solid #fff;
}
.statustext {
  padding-left: 2px;
  margin-right: auto;
  color: #222;
  line-height: 13px;
}
.panel {
  margin-left: 2px;
  border-top: 1px solid #a8a8a8;
  border-left: 1px solid #a8a8a8;
  line-height: 12px;
  text-align: center;
  color: #444;
}
.p-a { width: 13px; }
.p-b { width: 454px; }
.p-smart { width: 39px; }
.p-cap { width: 21px; }
.p-num { width: 21px; margin-right: 1px; }

/* task bar */
.taskbar {
  display: flex;
  align-items: center;
  height: 26px;
  background-color: #6b0b32;
  color: #fff;
}
.task {
  flex: none;
  display: flex;
  align-items: center;
  justify-content: center;
  width: 32.67px;
  height: 26px;
}
.tkicon {
  width: 15px;
  height: 15px;
}
.task-open {
  box-shadow: inset 0 -2px 0 -0 #dc8fb0;
}
.task-cx {
  background-color: #c23a1c;
}
.task-rec {
  background-color: #a60d4c;
}
.dimtext {
  display: flex;
  align-items: center;
  margin-left: 444px;
  color: #7e2146;
  white-space: nowrap;
}
.dimbox {
  width: 10px;
  height: 10px;
  margin-right: 5px;
  border: 1px solid #7e2146;
}
.tray {
  display: flex;
  align-items: center;
  margin-left: auto;
  height: 26px;
  line-height: 11px;
  text-align: center;
}
.tray-chev {
  width: 10px;
  height: 6px;
  margin-right: 7px;
}
.tray-net {
  width: 12px;
  height: 12px;
  margin-right: 3px;
}
.tray-vol {
  width: 13px;
  height: 12px;
  margin-right: 3px;
}
.tray-lang {
  width: 22px;
}
.tray-clock {
  width: 42px;
}
.tray-note {
  position: relative;
  display: flex;
  width: 14px;
  margin-left: 9px;
  margin-right: 14px;
}
.tray-noteicon {
  width: 13px;
  height: 12px;
}
.tray-badge {
  position: absolute;
  left: 5px;
  top: 5px;
  width: 11px;
  height: 11px;
  border-radius: 50%;
  background-color: #a8134f;
  border: 1px solid #e8c4d4;
  font-size: 7px;
  line-height: 9px;
}

/* watermark */
.watermark {
  position: absolute;
  left: 540px;
  top: 2px;
  font-family: "DejaVu Sans", sans-serif;
  font-weight: bold;
  font-size: 16.7px;
  line-height: 22px;
  color: #fff;
  -webkit-text-stroke: 2.5px #555;
  paint-order: stroke fill;
}

/* change plc dialog */
.dialog {
  position: absolute;
  left: 533px;
  top: 235px;
  width: 215px;
  height: 224px;
  background-color: #f0f0f0;
  border: 1px solid #8e8e8e;
  box-shadow: 1px 1px 3px rgba(0, 0, 0, .35);
}
.dlgtitle {
  display: flex;
  align-items: center;
  justify-content: space-between;
  height: 16px;
  padding: 0 6px 4px 2px;
  background-color: #fff;
  color: #8a8a8a;
}
.dlgclose {
  width: 8px;
  height: 8px;
  fill: none;
  stroke: #777;
}
.dlgbody {
  padding: 0 7px;
}
.grp {
  margin: 0;
  padding: 3px 4px 3px 7px;
  min-width: 0;
  border: 1px solid #bcbcbc;
  box-shadow: inset 1px 1px 0 #fafafa;
}
.grp legend {
  margin-left: -3px;
  padding: 0 1px;
  height: 10px;
  line-height: 10px;
  color: #444;
}
.grp-name {
  margin-top: 1px;
  padding-top: 2px;
}
.grp-type {
  margin-top: 1px;
  padding-bottom: 6px;
}
.grp-net {
  margin-top: 1px;
  padding-top: 2px;
  padding-bottom: 19px;
}
.grp-comment {
  margin-top: 4px;
  padding-top: 2px;
  padding-right: 6px;
  padding-bottom: 6px;
}
.field {
  width: 128px;
  height: 14px;
  padding-left: 1px;
  line-height: 12px;
  background-color: #fff;
  border-top: 1px solid #555;
  border-left: 1px solid #555;
  color: #444;
}
.grprow {
  display: flex;
  gap: 6px;
}
.combo {
  display: flex;
  justify-content: space-between;
  width: 130px;
  height: 14px;
  padding-left: 2px;
  line-height: 12px;
  background-color: #fff;
  border-top: 1px solid #555;
  border-left: 1px solid #555;
  color: #444;
}
.comboarrow {
  position: relative;
  width: 12px;
  background-color: #f0f0f0;
  box-shadow: inset -1px -1px 0 #666, inset 1px 1px 0 #fff;
}
.comboarrow::after {
  content: "";
  position: absolute;
  left: 3px;
  top: 5px;
  border-top: 3px solid #222;
  border-left: 3px solid transparent;
  border-right: 3px solid transparent;
}
.btn {
  margin: 0;
  padding: 0;
  font: inherit;
  color: #444;
  background-color: #f0f0f0;
  border: none;
  box-shadow: inset -1px -1px 0 #666, inset 1px 1px 0 #fff;
}
.btn-set {
  width: 50px;
  height: 14px;
  line-height: 12px;
}
.memo {
  display: flex;
  justify-content: flex-end;
  height: 42px;
  background-color: #fff;
  border-top: 1px solid #555;
  border-left: 1px solid #555;
}
.memoscroll {
  display: flex;
  flex-direction: column;
  justify-content: space-between;
  align-items: center;
  width: 11px;
  padding: 5px 0;
  background-color: #f0f0f0;
}
.memoarrow {
  width: 6px;
  height: 4px;
  fill: none;
  stroke: #b0b0b0;
}
.dlgbtns {
  display: flex;
  gap: 8px;
  margin-top: 6px;
}
.btn-main {
  width: 49px;
  height: 16px;
}
.btn-help {
  width: 50px;
  margin-left: auto;
}

/* bandicam panel */
.bandicam {
  position: absolute;
  left: 762px;
  top: 635px;
  width: 413px;
  height: 59px;
  background-color: #23282e;
  border: 1px solid #2c3238;
  border-bottom: none;
  color: #dfe3e6;
}
.bc-head {
  display: flex;
  align-items: center;
  height: 21px;
  padding-left: 6px;
  background-color: #3d4550;
}
.bc-logo {
  font-weight: bold;
  font-size: 9.5px;
  letter-spacing: .6px;
  color: #e4e6e8;
}
.bc-logo em, .bc-unreg em {
  font-style: normal;
  color: #d8342c;
}
.bc-unreg {
  margin-left: 6px;
  padding: 1px 2px;
  height: 11px;
  background-color: #2c3036;
  font-size: 6px;
  line-height: 9px;
  color: #a4a8ac;
}
.bc-actions {
  display: flex;
  margin-left: auto;
  padding-right: 2px;
  height: 21px;
}
.bc-act {
  display: flex;
  align-items: center;
  justify-content: center;
  width: 21.5px;
  font-weight: bold;
  color: #d8dde2;
}
.bc-lock {
  background-color: #345f8e;
}
.bc-q {
  font-size: 9px;
}
.bc-dash::after, .bc-line::after {
  content: "";
  width: 3px;
  height: 1px;
  margin-top: 6px;
  background-color: #8c949c;
}
.bc-line::after {
  width: 7px;
}
.bc-acticon {
  width: 10px;
  height: 10px;
}
.bc-main {
  display: flex;
  align-items: center;
  height: 37px;
}
.bc-tab {
  display: flex;
  flex-direction: column;
  align-items: center;
  justify-content: center;
  height: 37px;
}
.bc-screen {
  width: 46px;
  background-color: #3c92e6;
}
.bc-drop {
  width: 9px;
  margin-left: 1px;
  background-color: #3c80c8;
}
.bc-mode {
  width: 53px;
  margin-left: 1px;
  background-color: #3c6c9e;
}
.bc-monitor {
  width: 18px;
  height: 16px;
}
.bc-chev {
  width: 6px;
  height: 4px;
}
.bc-gamepad {
  width: 18px;
  height: 12px;
}
.bc-hdmiicon {
  width: 18px;
  height: 7px;
}
.bc-hdmitext {
  font-size: 6px;
  line-height: 7px;
  font-weight: bold;
  letter-spacing: .5px;
  color: #b9cfe2;
}
.bc-mics {
  display: flex;
  flex-direction: column;
  gap: 2px;
  margin-left: 3px;
}
.bc-mic {
  display: flex;
  align-items: center;
  justify-content: center;
  width: 14px;
  height: 14px;
  background-color: #16191d;
}
.bc-micicon {
  width: 10px;
  height: 10px;
}
.bc-cam {
  display: flex;
  align-items: center;
  justify-content: center;
  width: 39px;
  height: 30px;
  margin-left: 1px;
  background-color: #16191d;
}
.bc-camicon {
  width: 14px;
  height: 16px;
}
.bc-meter {
  display: flex;
  align-items: flex-end;
  width: 6px;
  height: 30px;
  margin-left: 3px;
  background-image: radial-gradient(#444 40%, transparent 45%);
  background-size: 2px 2px;
}
.bc-meterfill {
  width: 6px;
  height: 8px;
  background-image: radial-gradient(#4a90d8 50%, transparent 55%);
  background-size: 2px 2px;
}
.bc-time {
  display: flex;
  flex-direction: column;
  margin-left: 8px;
  margin-top: -1px;
  width: 86px;
}
.bc-clock {
  font-family: "DejaVu Sans Mono", monospace;
  font-size: 14px;
  line-height: 16px;
  letter-spacing: -1.1px;
  color: #eef0f2;
}
.bc-size {
  font-family: "Noto Sans", sans-serif;
  font-size: 8.5px;
  line-height: 11px;
  color: #d4d8dc;
}
.bc-pause {
  width: 10px;
  height: 11px;
  margin-left: 1px;
}
.bc-rec {
  flex: none;
  display: flex;
  align-items: center;
  justify-content: center;
  width: 44px;
  height: 44px;
  margin: 0 0 2px 8px;
  border-radius: 50%;
  background-color: #3d4550;
}
.bc-recdot {
  display: flex;
  align-items: center;
  justify-content: center;
  width: 36px;
  height: 36px;
  border-radius: 50%;
  background-color: #e8403c;
}
.bc-recstop {
  width: 12px;
  height: 12px;
  background-color: #fff;
}
.bc-shot {
  width: 13px;
  height: 11px;
  margin-left: 4px;
}
```
